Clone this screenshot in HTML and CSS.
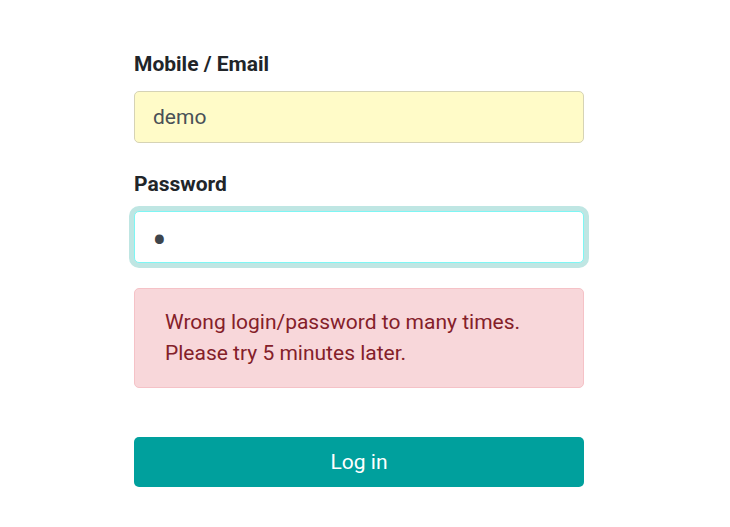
FILE: index.html
```html
<!DOCTYPE html>
<html lang="en">
<head>
<meta charset="utf-8">
<title>Login</title>
<link rel="stylesheet" href="styles.css">
</head>
<body>
<form class="login">
  <div class="field">
    <label class="label" for="login">Mobile / Email</label>
    <input class="input input-filled" id="login" type="text" value="demo">
  </div>
  <div class="field field-password">
    <label class="label" for="password">Password</label>
    <input class="input input-focus" id="password" type="password" value="x">
  </div>
  <div class="alert">
    <p>Wrong login/password to many times.</p>
    <p>Please try 5 minutes later.</p>
  </div>
  <button class="btn" type="button">Log in</button>
</form>
</body>
</html>
```
FILE: styles.css
```css
* { box-sizing: border-box; }
html, body { margin: 0; padding: 0; background: #fff; }
body {
  font-family: Roboto, "Noto Sans", "Liberation Sans", sans-serif;
  font-size: 21px;
  line-height: 1.5;
  color: #212529;
}
.login {
  width: 450px;
  margin-left: 134px;
  padding-top: 49px;
  display: flex;
  flex-direction: column;
}
.field { display: flex; flex-direction: column; }
.field-password { margin-top: 26px; }
.label {
  font-weight: 700;
  font-size: 21px;
  line-height: 30px;
  margin-bottom: 12px;
  color: #212529;
}
.input {
  height: 52px;
  width: 100%;
  border: 1px solid #d4d4d4;
  border-radius: 5px;
  padding: 0 18px;
  font-family: inherit;
  font-size: 21px;
  color: #495057;
  background: #fff;
  outline: none;
}
.input-filled { background: #fffbc8; border-color: #d6d3b5; }
.input-focus {
  border-color: #7ef6f4;
  box-shadow: 0 0 0 5px #bfe6e3;
  font-size: 44px;
  padding: 7px 18px 0 17px;
  color: #3e454c;
}
.alert {
  margin-top: 25px;
  background: #f8d7da;
  border: 1px solid #f5c2c7;
  border-radius: 5px;
  color: #842029;
  padding: 18px 20px 18px 30px;
}
.alert p { margin: 0; line-height: 31px; font-size: 21px; }
.btn {
  margin-top: 49px;
  height: 50px;
  border: 0;
  border-radius: 5px;
  background: #00a09d;
  color: #fff;
  font-family: inherit;
  font-size: 21px;
  cursor: pointer;
}
```
